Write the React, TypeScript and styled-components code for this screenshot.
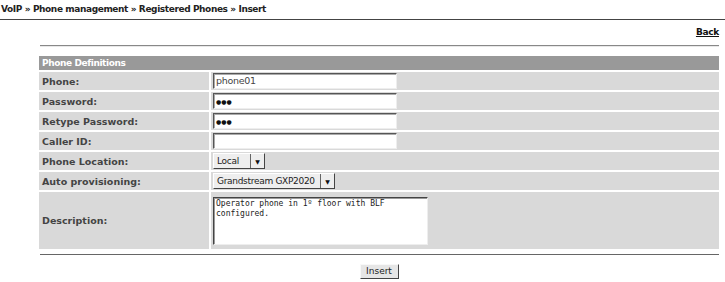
import styled, { createGlobalStyle } from 'styled-components';

const GlobalStyle = createGlobalStyle`
  body {
    margin: 0;
    background: #fff;
    font-family: "DejaVu Sans", Verdana, sans-serif;
    font-size: 9px;
    color: #333;
  }
`;

const Breadcrumb = styled.div`
  font-weight: bold;
  font-size: 9px;
  letter-spacing: -0.4px;
  padding: 4px 0 0 1px;
  height: 15px;
  border-bottom: 1px solid #444;
  color: #222;
`;

const BackRow = styled.div`
  display: flex;
  justify-content: flex-end;
  padding: 7px 6px 0 0;
  height: 18px;
`;

const BackLink = styled.a`
  font-weight: bold;
  font-size: 9px;
  letter-spacing: -0.3px;
  color: #111;
  text-decoration: underline;
  cursor: pointer;
`;

const Content = styled.div`
  margin: 0 6px 0 39px;
`;

const Rule = styled.div`
  height: 1px;
  background: #888;
  border-bottom: 1px solid #e8e8e8;
  margin-left: 1px;
`;

const FormTable = styled.table`
  width: 100%;
  border-collapse: separate;
  border-spacing: 0 2px;
  margin-top: 7px;
`;

const HeaderCell = styled.th`
  background: #999;
  color: #fff;
  text-align: left;
  font-weight: bold;
  font-size: 9px;
  letter-spacing: -0.4px;
  height: 14px;
  padding: 0 3px;
`;

const Label = styled.td<{ $tall?: boolean }>`
  background: #d9d9d9;
  color: #444;
  font-weight: bold;
  font-size: 9.5px;
  padding: 0 3px;
  width: 164px;
  height: ${(p) => (p.$tall ? '57px' : '18px')};
  border-right: 2px solid #fff;
`;

const Field = styled.td`
  background: #d9d9d9;
  padding: 1px 2px;
`;

const TextInput = styled.div`
  box-sizing: border-box;
  width: 184px;
  height: 16px;
  background: #fff;
  border: 1px solid;
  border-color: #555 #eee #eee #555;
  box-shadow: inset 1px 1px 0 #aaa;
  font-size: 9.5px;
  letter-spacing: -0.3px;
  color: #444;
  padding: 0 2px;
  line-height: 14px;
  font-family: "DejaVu Sans", Verdana, sans-serif;
`;

const Dots = styled.span`
  font-size: 6px;
  letter-spacing: 0;
  color: #111;
  vertical-align: middle;
`;

const SelectBox = styled.div`
  display: inline-flex;
  align-items: stretch;
  box-sizing: border-box;
  height: 16px;
  background: #eee;
  border: 1px solid;
  border-color: #fff #444 #444 #fff;
  font-size: 9px;
  letter-spacing: -0.3px;
  color: #222;
`;

const SelectText = styled.span<{ $w: number }>`
  width: ${(p) => p.$w}px;
  padding: 0 3px;
  line-height: 14px;
  white-space: nowrap;
`;

const SelectArrow = styled.span`
  width: 13px;
  border-left: 1px solid #666;
  display: flex;
  align-items: center;
  justify-content: center;
  font-size: 6px;
  color: #111;
`;

const TextArea = styled.div`
  box-sizing: border-box;
  width: 215px;
  height: 48px;
  background: #fff;
  border: 1px solid;
  border-color: #444 #eee #eee #444;
  box-shadow: inset 1px 1px 0 #999;
  font-family: "DejaVu Sans Mono", "Liberation Mono", monospace;
  font-size: 8px;
  line-height: 10px;
  color: #222;
  padding: 1px 2px;
`;

const BottomRule = styled.div`
  height: 1px;
  background: #666;
  margin: 3px 0 0 1px;
`;

const ButtonRow = styled.div`
  display: flex;
  justify-content: center;
  padding-top: 9px;
`;

const Button = styled.button`
  font-family: "DejaVu Sans", Verdana, sans-serif;
  font-size: 9px;
  color: #222;
  background: #e6e6e6;
  border: 1px solid;
  border-color: #f8f8f8 #444 #444 #f8f8f8;
  width: 39px;
  padding: 0;
  height: 15px;
  line-height: 13px;
`;

const Select = ({ value, width }: { value: string; width: number }) => (
  <SelectBox>
    <SelectText $w={width}>{value}</SelectText>
    <SelectArrow>▼</SelectArrow>
  </SelectBox>
);

export default function App() {
  return (
    <>
      <GlobalStyle />
      <Breadcrumb>VoIP » Phone management » Registered Phones » Insert</Breadcrumb>
      <BackRow>
        <BackLink>Back</BackLink>
      </BackRow>
      <Content>
        <Rule />
        <FormTable>
          <tbody>
            <tr>
              <HeaderCell colSpan={2}>Phone Definitions</HeaderCell>
            </tr>
            <tr>
              <Label>Phone:</Label>
              <Field>
                <TextInput>phone01</TextInput>
              </Field>
            </tr>
            <tr>
              <Label>Password:</Label>
              <Field>
                <TextInput>
                  <Dots>●●●</Dots>
                </TextInput>
              </Field>
            </tr>
            <tr>
              <Label>Retype Password:</Label>
              <Field>
                <TextInput>
                  <Dots>●●●</Dots>
                </TextInput>
              </Field>
            </tr>
            <tr>
              <Label>Caller ID:</Label>
              <Field>
                <TextInput />
              </Field>
            </tr>
            <tr>
              <Label>Phone Location:</Label>
              <Field>
                <Select value="Local" width={30} />
              </Field>
            </tr>
            <tr>
              <Label>Auto provisioning:</Label>
              <Field>
                <Select value="Grandstream GXP2020" width={100} />
              </Field>
            </tr>
            <tr>
              <Label $tall>Description:</Label>
              <Field>
                <TextArea>
                  Operator phone in 1º floor with BLF
                  <br />
                  configured.
                </TextArea>
              </Field>
            </tr>
          </tbody>
        </FormTable>
        <BottomRule />
        <ButtonRow>
          <Button>Insert</Button>
        </ButtonRow>
      </Content>
    </>
  );
}
